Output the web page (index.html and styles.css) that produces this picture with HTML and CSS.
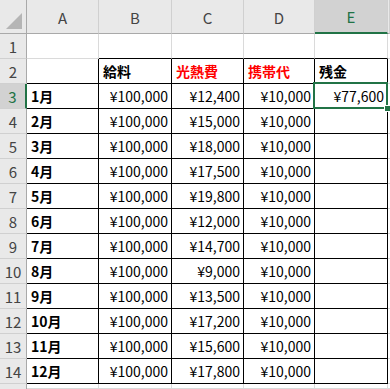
FILE: index.html
```html
<!DOCTYPE html>
<html lang="ja">
<head>
<meta charset="utf-8">
<title>Sheet</title>
<link rel="stylesheet" href="styles.css">
</head>
<body>
<div class="sheet">
  <div class="h corner"><span class="tri"></span></div>
  <div class="h">A</div><div class="h">B</div><div class="h">C</div><div class="h">D</div><div class="h hsel">E</div><div class="h"></div>

  <div class="rh">1</div>
  <div class="c"></div><div class="c bB"></div><div class="c bB"></div><div class="c bB"></div><div class="c bB"></div><div class="c"></div>

  <div class="rh">2</div>
  <div class="c bR bB"></div><div class="c bR bB lbl">給料</div><div class="c bR bB lbl red">光熱費</div><div class="c bR bB lbl red">携帯代</div><div class="c bR bB lbl">残金</div><div class="c"></div>

  <div class="rh rsel">3</div>
  <div class="c bR bB lbl">1月</div><div class="c bR bB num">¥100,000</div><div class="c bR bB num">¥12,400</div><div class="c bR bB num">¥10,000</div><div class="c bR bB num sel">¥77,600</div><div class="c"></div>

  <div class="rh">4</div>
  <div class="c bR bB lbl">2月</div><div class="c bR bB num">¥100,000</div><div class="c bR bB num">¥15,000</div><div class="c bR bB num">¥10,000</div><div class="c bR bB"></div><div class="c"></div>

  <div class="rh">5</div>
  <div class="c bR bB lbl">3月</div><div class="c bR bB num">¥100,000</div><div class="c bR bB num">¥18,000</div><div class="c bR bB num">¥10,000</div><div class="c bR bB"></div><div class="c"></div>

  <div class="rh">6</div>
  <div class="c bR bB lbl">4月</div><div class="c bR bB num">¥100,000</div><div class="c bR bB num">¥17,500</div><div class="c bR bB num">¥10,000</div><div class="c bR bB"></div><div class="c"></div>

  <div class="rh">7</div>
  <div class="c bR bB lbl">5月</div><div class="c bR bB num">¥100,000</div><div class="c bR bB num">¥19,800</div><div class="c bR bB num">¥10,000</div><div class="c bR bB"></div><div class="c"></div>

  <div class="rh">8</div>
  <div class="c bR bB lbl">6月</div><div class="c bR bB num">¥100,000</div><div class="c bR bB num">¥12,000</div><div class="c bR bB num">¥10,000</div><div class="c bR bB"></div><div class="c"></div>

  <div class="rh">9</div>
  <div class="c bR bB lbl">7月</div><div class="c bR bB num">¥100,000</div><div class="c bR bB num">¥14,700</div><div class="c bR bB num">¥10,000</div><div class="c bR bB"></div><div class="c"></div>

  <div class="rh">10</div>
  <div class="c bR bB lbl">8月</div><div class="c bR bB num">¥100,000</div><div class="c bR bB num">¥9,000</div><div class="c bR bB num">¥10,000</div><div class="c bR bB"></div><div class="c"></div>

  <div class="rh">11</div>
  <div class="c bR bB lbl">9月</div><div class="c bR bB num">¥100,000</div><div class="c bR bB num">¥13,500</div><div class="c bR bB num">¥10,000</div><div class="c bR bB"></div><div class="c"></div>

  <div class="rh">12</div>
  <div class="c bR bB lbl">10月</div><div class="c bR bB num">¥100,000</div><div class="c bR bB num">¥17,200</div><div class="c bR bB num">¥10,000</div><div class="c bR bB"></div><div class="c"></div>

  <div class="rh">13</div>
  <div class="c bR bB lbl">11月</div><div class="c bR bB num">¥100,000</div><div class="c bR bB num">¥15,600</div><div class="c bR bB num">¥10,000</div><div class="c bR bB"></div><div class="c"></div>

  <div class="rh">14</div>
  <div class="c bR bB lbl">12月</div><div class="c bR bB num">¥100,000</div><div class="c bR bB num">¥17,800</div><div class="c bR bB num">¥10,000</div><div class="c bR bB"></div><div class="c"></div>

  <div class="rh rlast"></div>
  <div class="c"></div><div class="c"></div><div class="c"></div><div class="c"></div><div class="c"></div><div class="c"></div>
</div>
</body>
</html>
```
FILE: styles.css
```css
html, body {
  margin: 0;
  padding: 0;
  background: #ffffff;
  overflow: hidden;
}
.sheet {
  display: grid;
  width: 390px;
  height: 389px;
  overflow: hidden;
  grid-template-columns: 27px 72px 73px 72px 71px 73px minmax(0, 1fr);
  grid-template-rows: 34px repeat(14, 25px) 5px;
  font-family: "Noto Sans CJK JP", "Noto Sans", sans-serif;
  font-size: 14px;
  color: #000;
}
.sheet > div {
  box-sizing: border-box;
  display: flex;
  align-items: center;
  white-space: nowrap;
  min-width: 0;
}
.h {
  background: #e9e9e9;
  border-right: 1px solid #d0d0d0;
  border-bottom: 1px solid #a9a9a9;
  justify-content: center;
  color: #444;
  font-size: 15px;
  padding-top: 1px;
}
.corner {
  position: relative;
  border-right: 1px solid #a9a9a9;
}
.tri {
  position: absolute;
  right: 4px;
  bottom: 4px;
  width: 0;
  height: 0;
  border-left: 16px solid transparent;
  border-bottom: 16px solid #b5b5b5;
}
.hsel {
  background: #d2d2d2;
  color: #217346;
  border-bottom: 2px solid #217346;
}
.rh {
  background: #e9e9e9;
  border-right: 1px solid #a9a9a9;
  border-bottom: 1px solid #d0d0d0;
  justify-content: center;
  color: #444;
  font-size: 15px;
}
.rlast {
  border-bottom: none;
}
.rsel {
  background: #d2d2d2;
  color: #217346;
  border-right: 2px solid #217346;
}
.c {
  border-right: 1px solid #dadada;
  border-bottom: 1px solid #dadada;
  padding: 0 3px 0 4px;
}
.c.bR { border-right-color: #000; }
.c.bB { border-bottom-color: #000; }
.lbl {
  font-weight: bold;
}
.red {
  color: #ff0000;
}
.num {
  justify-content: flex-end;
}
.sel {
  position: relative;
}
.sel::after {
  content: "";
  position: absolute;
  left: -2px;
  top: -2px;
  right: -1px;
  bottom: -1px;
  border: 2px solid #217346;
}
.sel::before {
  content: "";
  position: absolute;
  right: -4px;
  bottom: -4px;
  width: 5px;
  height: 5px;
  background: #217346;
  border: 1px solid #fff;
  z-index: 2;
}
```
